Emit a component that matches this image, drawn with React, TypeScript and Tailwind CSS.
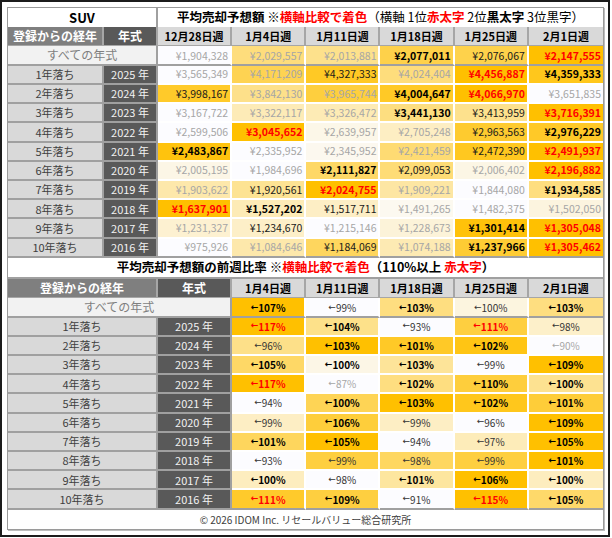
import React from 'react';

const WHITE = [252, 252, 255];
const ORANGE = [255, 192, 0];

function scaleColor(f: number): string {
  const c = WHITE.map((w, i) => Math.round(w + (ORANGE[i] - w) * f));
  return `rgb(${c[0]},${c[1]},${c[2]})`;
}

function fracs(vals: number[]): number[] {
  const mn = Math.min(...vals);
  const mx = Math.max(...vals);
  return vals.map((v) => (mx === mn ? 0 : (v - mn) / (mx - mn)));
}

function ranks(vals: number[]): number[] {
  const idx = vals.map((v, i) => i).sort((a, b) => vals[b] - vals[a]);
  const r = new Array(vals.length).fill(0);
  idx.forEach((i, k) => (r[i] = k));
  return r;
}

const fmtYen = (v: number) => '¥' + v.toLocaleString('en-US');

type TopRow = { label: string; year?: string; vals: number[] };

const topRows: TopRow[] = [
  { label: 'すべての年式', vals: [1904328, 2029557, 2013881, 2077011, 2076067, 2147555] },
  { label: '1年落ち', year: '2025 年', vals: [3565349, 4171209, 4327333, 4024404, 4456887, 4359333] },
  { label: '2年落ち', year: '2024 年', vals: [3998167, 3842130, 3965744, 4004647, 4066970, 3651835] },
  { label: '3年落ち', year: '2023 年', vals: [3167722, 3322117, 3326472, 3441130, 3413959, 3716391] },
  { label: '4年落ち', year: '2022 年', vals: [2599506, 3045652, 2639957, 2705248, 2963563, 2976229] },
  { label: '5年落ち', year: '2021 年', vals: [2483867, 2335952, 2345952, 2421459, 2472390, 2491937] },
  { label: '6年落ち', year: '2020 年', vals: [2005195, 1984696, 2111827, 2099053, 2006402, 2196882] },
  { label: '7年落ち', year: '2019 年', vals: [1903622, 1920561, 2024755, 1909221, 1844080, 1934585] },
  { label: '8年落ち', year: '2018 年', vals: [1637901, 1527202, 1517711, 1491265, 1482375, 1502050] },
  { label: '9年落ち', year: '2017 年', vals: [1231327, 1234670, 1215146, 1228673, 1301414, 1305048] },
  { label: '10年落ち', year: '2016 年', vals: [975926, 1084646, 1184069, 1074188, 1237966, 1305462] },
];

type BotRow = { label: string; year?: string; vals: number[]; st: string };

const botRows: BotRow[] = [
  { label: 'すべての年式', vals: [107, 99, 103, 100, 103], st: 'bnbnb' },
  { label: '1年落ち', year: '2025 年', vals: [117, 104, 93, 111, 98], st: 'rbnrn' },
  { label: '2年落ち', year: '2024 年', vals: [96, 103, 101, 102, 90], st: 'nbbbg' },
  { label: '3年落ち', year: '2023 年', vals: [105, 100, 103, 99, 109], st: 'bbbnb' },
  { label: '4年落ち', year: '2022 年', vals: [117, 87, 102, 110, 100], st: 'rgbbb' },
  { label: '5年落ち', year: '2021 年', vals: [94, 100, 103, 102, 101], st: 'nbbbb' },
  { label: '6年落ち', year: '2020 年', vals: [99, 106, 99, 96, 109], st: 'nbnnb' },
  { label: '7年落ち', year: '2019 年', vals: [101, 105, 94, 97, 105], st: 'bbnnb' },
  { label: '8年落ち', year: '2018 年', vals: [93, 99, 98, 99, 101], st: 'nnnnb' },
  { label: '9年落ち', year: '2017 年', vals: [100, 98, 101, 106, 100], st: 'bnbbb' },
  { label: '10年落ち', year: '2016 年', vals: [111, 109, 91, 115, 105], st: 'rbnrb' },
];

const topDates = ['12月28日週', '1月4日週', '1月11日週', '1月18日週', '1月25日週', '2月1日週'];
const botDates = ['1月4日週', '1月11日週', '1月18日週', '1月25日週', '2月1日週'];

const rankClass = ['text-[#ff0000] font-bold', 'text-black font-bold', 'text-[#1a1a1a]'];
const stClass: Record<string, string> = {
  r: 'text-[#ff0000] font-bold',
  b: 'text-black font-bold',
  n: 'text-[#333333]',
  g: 'text-[#a6a6a6]',
};

function Arrow() {
  return <span className="font-['DejaVu_Sans',sans-serif] text-[9px]">←</span>;
}

export default function App() {
  return (
    <div className="w-[612px] h-[538px] bg-white font-['Noto_Sans_CJK_JP',sans-serif]">
      <div className="w-[610px] h-[537px] border-2 border-[#1c1c1c] pt-[5px] pl-[5px]">
        <div className="w-[597px] h-[523px] border border-[#9a9a9a] shadow-[1px_1px_0_#bdbdbd] flex flex-col">
          {/* Top title */}
          <div className="flex-1 min-h-0 grid grid-cols-[150px_1fr]">
            <div className="bg-white border-r-2 border-b-2 border-[#a0a0a0] flex items-center justify-center text-[13px] font-bold text-black">
              SUV
            </div>
            <div className="bg-white border-b-2 border-[#a0a0a0] flex items-center justify-center text-[12.5px] text-black whitespace-nowrap">
              <span className="font-bold">平均売却予想額 ※</span>
              <span className="font-bold text-[#ff0000]">横軸比較で着色</span>
              <span>（横軸 1位</span>
              <span className="font-bold text-[#ff0000]">赤太字</span>
              <span>&nbsp;2位</span>
              <span className="font-bold">黒太字</span>
              <span>&nbsp;3位黒字）</span>
            </div>
          </div>
          {/* Top header */}
          <div className="flex-1 min-h-0 grid grid-cols-[96px_54px_repeat(6,1fr)]">
            <div className="bg-[#7f7f7f] border-r-2 border-b-2 border-[#a6a6a6] flex items-center justify-center text-[12px] font-bold text-white">
              登録からの経年
            </div>
            <div className="bg-[#595959] border-r-2 border-b-2 border-[#a6a6a6] flex items-center justify-center text-[12px] font-bold text-white">
              年式
            </div>
            {topDates.map((d, i) => (
              <div
                key={d}
                className={`bg-[#d9d9d9] border-b-2 border-[#a6a6a6] flex items-center justify-center text-[11px] font-bold text-black ${i < 5 ? 'border-r-2' : ''}`}
              >
                {d}
              </div>
            ))}
          </div>
          {/* Top body */}
          {topRows.map((row, ri) => {
            const f = fracs(row.vals);
            const rk = ranks(row.vals);
            const grayBottom = ri === 0 || ri === topRows.length - 1;
            return (
              <div key={row.label} className="flex-1 min-h-0 grid grid-cols-[96px_54px_repeat(6,1fr)]">
                {row.year ? (
                  <>
                    <div className="bg-[#d9d9d9] border-r-2 border-b-2 border-[#a0a0a0] flex items-center justify-center text-[11px] text-[#404040]">
                      {row.label}
                    </div>
                    <div className="bg-[#595959] border-r-2 border-b-2 border-[#a0a0a0] flex items-center justify-center text-[11px] text-[#f2f2f2]">
                      {row.year}
                    </div>
                  </>
                ) : (
                  <div className="col-span-2 bg-[#f2f2f2] border-r-2 border-b-2 border-[#a0a0a0] flex items-center justify-center text-[12px] text-[#7f7f7f]">
                    {row.label}
                  </div>
                )}
                {row.vals.map((v, ci) => (
                  <div
                    key={ci}
                    style={{ backgroundColor: scaleColor(f[ci]) }}
                    className={`border-b-2 ${grayBottom ? 'border-b-[#a0a0a0]' : 'border-b-white'} ${ci < 5 ? 'border-r-2 border-r-white' : ''} flex items-center justify-end pr-[2px] text-[10.5px] ${rankClass[rk[ci]] ?? 'text-[#a6a6a6]'}`}
                  >
                    {fmtYen(v)}
                  </div>
                ))}
              </div>
            );
          })}
          {/* Bottom title */}
          <div className="flex-1 min-h-0 bg-white border-b-2 border-[#a0a0a0] flex items-center justify-center text-[12.5px] font-bold text-black whitespace-nowrap">
            <span>平均売却予想額の前週比率 ※</span>
            <span className="text-[#ff0000]">横軸比較で着色</span>
            <span>（110%以上&nbsp;</span>
            <span className="text-[#ff0000]">赤太字</span>
            <span>）</span>
          </div>
          {/* Bottom header */}
          <div className="flex-1 min-h-0 grid grid-cols-[150px_74px_repeat(5,1fr)]">
            <div className="bg-[#7f7f7f] border-r-2 border-b-2 border-[#a6a6a6] flex items-center justify-center text-[12px] font-bold text-white">
              登録からの経年
            </div>
            <div className="bg-[#595959] border-r-2 border-b-2 border-[#a6a6a6] flex items-center justify-center text-[12px] font-bold text-white">
              年式
            </div>
            {botDates.map((d, i) => (
              <div
                key={d}
                className={`bg-[#d9d9d9] border-b-2 border-[#a6a6a6] flex items-center justify-center text-[11px] font-bold text-black ${i < 4 ? 'border-r-2' : ''}`}
              >
                {d}
              </div>
            ))}
          </div>
          {/* Bottom body */}
          {botRows.map((row, ri) => {
            const f = fracs(row.vals);
            const grayBottom = ri === 0 || ri === botRows.length - 1;
            return (
              <div key={row.label} className="flex-1 min-h-0 grid grid-cols-[150px_74px_repeat(5,1fr)]">
                {row.year ? (
                  <>
                    <div className="bg-[#d9d9d9] border-r-2 border-b-2 border-[#a0a0a0] flex items-center justify-center text-[11px] text-[#404040]">
                      {row.label}
                    </div>
                    <div className="bg-[#595959] border-r-2 border-b-2 border-[#a0a0a0] flex items-center justify-center text-[11px] text-[#f2f2f2]">
                      {row.year}
                    </div>
                  </>
                ) : (
                  <div className="col-span-2 bg-[#f2f2f2] border-r-2 border-b-2 border-[#a0a0a0] flex items-center justify-center text-[12px] text-[#7f7f7f]">
                    {row.label}
                  </div>
                )}
                {row.vals.map((v, ci) => (
                  <div
                    key={ci}
                    style={{ backgroundColor: scaleColor(f[ci]) }}
                    className={`border-b-2 ${grayBottom ? 'border-b-[#a0a0a0]' : 'border-b-white'} ${ci < 4 ? 'border-r-2 border-r-white' : ''} flex items-center justify-center text-[10px] ${stClass[row.st[ci]]}`}
                  >
                    <Arrow />
                    {v}%
                  </div>
                ))}
              </div>
            );
          })}
          {/* Footer */}
          <div className="flex-1 min-h-0 bg-white flex items-center justify-center text-[10px] text-[#404040]">
            © 2026 IDOM Inc. リセールバリュー総合研究所
          </div>
        </div>
      </div>
    </div>
  );
}
